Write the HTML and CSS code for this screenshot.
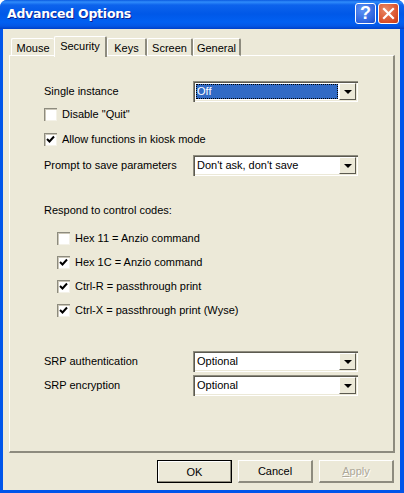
FILE: index.html
```html
<!DOCTYPE html>
<html lang="en">
<head>
    <meta charset="UTF-8">
    <title>Advanced Options</title>
    <link rel="stylesheet" href="styles.css">
</head>
<body>
    <div class="window">
        <div class="titlebar">
            <span class="title">Advanced Options</span>
            <button class="caption help">?</button>
            <button class="caption close">
                <svg width="13" height="13" viewBox="0 0 13 13"><path d="M2 2 L11 11 M11 2 L2 11" stroke="#fff" stroke-width="2.2" stroke-linecap="square" fill="none"/></svg>
            </button>
        </div>
        <div class="client">
            <div class="tabs">
                <div class="tab tab-mouse">Mouse</div>
                <div class="tab tab-security active">Security</div>
                <div class="tab tab-keys">Keys</div>
                <div class="tab tab-screen">Screen</div>
                <div class="tab tab-general">General</div>
            </div>
            <div class="panel">
                <div class="row first">
                    <span class="label">Single instance</span>
                    <div class="combo focused">
                        <div class="combo-text"><span>Off</span></div>
                        <div class="combo-arrow"><i></i></div>
                    </div>
                </div>
                <div class="check disable-quit"><span class="box"></span>Disable "Quit"</div>
                <div class="check allow-kiosk"><span class="box checked"><svg width="9" height="9" viewBox="0 0 9 9"><path d="M1 4 L3.5 6.5 L8 1.5" stroke="#000" stroke-width="2" fill="none"/></svg></span>Allow functions in kiosk mode</div>
                <div class="row prompt">
                    <span class="label">Prompt to save parameters</span>
                    <div class="combo">
                        <div class="combo-text"><span>Don't ask, don't save</span></div>
                        <div class="combo-arrow"><i></i></div>
                    </div>
                </div>
                <div class="heading">Respond to control codes:</div>
                <div class="codes">
                    <div class="check"><span class="box"></span>Hex 11 = Anzio command</div>
                    <div class="check"><span class="box checked"><svg width="9" height="9" viewBox="0 0 9 9"><path d="M1 4 L3.5 6.5 L8 1.5" stroke="#000" stroke-width="2" fill="none"/></svg></span>Hex 1C = Anzio command</div>
                    <div class="check"><span class="box checked"><svg width="9" height="9" viewBox="0 0 9 9"><path d="M1 4 L3.5 6.5 L8 1.5" stroke="#000" stroke-width="2" fill="none"/></svg></span>Ctrl-R = passthrough print</div>
                    <div class="check"><span class="box checked"><svg width="9" height="9" viewBox="0 0 9 9"><path d="M1 4 L3.5 6.5 L8 1.5" stroke="#000" stroke-width="2" fill="none"/></svg></span>Ctrl-X = passthrough print (Wyse)</div>
                </div>
                <div class="row srp-auth">
                    <span class="label">SRP authentication</span>
                    <div class="combo">
                        <div class="combo-text"><span>Optional</span></div>
                        <div class="combo-arrow"><i></i></div>
                    </div>
                </div>
                <div class="row srp-enc">
                    <span class="label">SRP encryption</span>
                    <div class="combo">
                        <div class="combo-text"><span>Optional</span></div>
                        <div class="combo-arrow"><i></i></div>
                    </div>
                </div>
            </div>
            <div class="buttons">
                <button class="btn default">OK</button>
                <button class="btn">Cancel</button>
                <button class="btn disabled"><span><u>A</u>pply</span></button>
            </div>
        </div>
    </div>
</body>
</html>
```

FILE: styles.css
```css
html, body {
    margin: 0;
    padding: 0;
    background: #fff;
}
body {
    font-family: "Liberation Sans", Arial, sans-serif;
    font-size: 11px;
    color: #000;
}
.window {
    width: 404px;
    height: 493px;
    box-sizing: border-box;
    display: flex;
    flex-direction: column;
    background: #0055ea;
    border-radius: 7px 7px 0 0;
    overflow: hidden;
}
.titlebar {
    height: 29px;
    flex: none;
    display: flex;
    align-items: center;
    padding: 0 5px 2px 7px;
    box-sizing: border-box;
    background: linear-gradient(to bottom, #0a5ae0 0, #2f8cfb 2px, #0d63ec 5px, #0058e8 14px, #0160f2 22px, #0357e6 26px, #0040c8 29px);
}
.title {
    flex: 1;
    font-family: "DejaVu Sans", sans-serif;
    font-weight: bold;
    font-size: 12.5px;
    letter-spacing: -0.25px;
    color: #fff;
    text-shadow: 1px 1px 0 #0f1f8f;
}
.caption {
    width: 21px;
    height: 21px;
    padding: 0;
    margin-left: 2px;
    box-sizing: border-box;
    border: 1px solid #fff;
    border-radius: 3px;
    display: flex;
    align-items: center;
    justify-content: center;
    color: #fff;
}
.help {
    font-family: "Liberation Sans", sans-serif;
    font-weight: bold;
    font-size: 18px;
    background: radial-gradient(circle at 35% 30%, #5f94f5, #2a5fdc 75%, #1c48bd);
}
.close {
    background: radial-gradient(circle at 35% 30%, #ea8a66, #d94e28 70%, #c23a18);
}
.client {
    flex: 1;
    margin: 0 4px 3px 3px;
    background: #ece9d8;
    padding: 7px 6px 0 6px;
    display: flex;
    flex-direction: column;
}
.tabs {
    display: flex;
    height: 20px;
    align-items: flex-end;
    padding-left: 2px;
    position: relative;
    z-index: 1;
    margin-bottom: -1px;
}
.tab {
    height: 18px;
    box-sizing: border-box;
    line-height: 18px;
    text-align: center;
    background: #ece9d8;
    border-top: 1px solid #fff;
    border-left: 1px solid #fff;
    border-right: 2px solid #8d8b7e;
    border-bottom: 1px solid #fff;
    border-radius: 2px 2px 0 0;
}
.tab.active {
    height: 21px;
    line-height: 18px;
    border-bottom: 0;
    position: relative;
    top: 1px;
}
.tab-mouse { width: 43px; border-right: 0; }
.tab-security { width: 53px; }
.tab-keys { width: 40px; }
.tab-screen { width: 46px; }
.tab-general { width: 48px; }
.panel {
    width: 386px;
    height: 398px;
    flex: none;
    box-sizing: border-box;
    border-top: 1px solid #fff;
    border-left: 1px solid #fff;
    border-right: 2px solid #8d8b7e;
    border-bottom: 2px solid #8d8b7e;
    padding: 0 0 0 34px;
}
.row {
    display: flex;
    align-items: center;
    height: 21px;
}
.label {
    width: 149px;
    flex: none;
    position: relative;
    top: -1px;
}
.first { margin-top: 25px; }
.prompt { margin-top: 8px; }
.srp-auth { margin-top: 33px; }
.srp-enc { margin-top: 3px; }
.combo {
    width: 165px;
    height: 21px;
    box-sizing: border-box;
    display: flex;
    background: #fff;
    padding: 2px;
    box-shadow: inset 1px 1px 0 #8d8b7e, inset 2px 2px 0 #5c5a50, inset -1px -1px 0 #fff, inset -2px -2px 0 #ece9d8;
}
.combo-text {
    flex: 1;
    padding: 1px;
    display: flex;
    min-width: 0;
}
.combo-text span {
    flex: 1;
    line-height: 15px;
    padding-left: 1px;
}
.focused .combo-text span {
    background: #316ac5;
    color: #fff;
    outline: 1px dotted #000;
    outline-offset: -1px;
}
.combo-arrow {
    width: 17px;
    flex: none;
    box-sizing: border-box;
    background: #ece9d8;
    border-top: 1px solid #fff;
    border-left: 1px solid #fff;
    border-right: 1px solid #5c5a50;
    border-bottom: 1px solid #5c5a50;
    display: flex;
    align-items: center;
    justify-content: center;
}
.combo-arrow i {
    width: 0;
    height: 0;
    border-left: 4px solid transparent;
    border-right: 4px solid transparent;
    border-top: 4px solid #000;
}
.check {
    display: flex;
    align-items: center;
    height: 16px;
    gap: 5px;
}
.disable-quit { margin-top: 4px; }
.allow-kiosk { margin-top: 9px; }
.box {
    width: 13px;
    height: 13px;
    flex: none;
    box-sizing: border-box;
    background: #fff;
    display: flex;
    align-items: center;
    justify-content: center;
    box-shadow: inset 1px 1px 0 #8d8b7e, inset 2px 2px 0 #cbc7b8, inset -1px -1px 0 #f4f2e8;
}
.heading {
    margin-top: 26px;
    height: 16px;
    line-height: 16px;
}
.codes {
    margin-top: 12px;
    padding-left: 13px;
    display: flex;
    flex-direction: column;
    gap: 8px;
}
.buttons {
    display: flex;
    justify-content: flex-end;
    gap: 6px;
    padding-right: 0;
    margin-top: 7px;
}
.btn {
    width: 75px;
    height: 23px;
    box-sizing: border-box;
    padding: 0;
    font-family: inherit;
    font-size: 11px;
    color: #000;
    background: #ece9d8;
    border-top: 1px solid #fff;
    border-left: 1px solid #fff;
    border-right: 2px solid #8d8b7e;
    border-bottom: 2px solid #8d8b7e;
}
.btn.default {
    border: 1px solid #000;
    box-shadow: inset -1px -1px 0 #8d8b7e, inset 1px 1px 0 #fff;
}
.btn.disabled {
    color: #aca899;
    text-shadow: 1px 1px 0 #fff;
}
```
